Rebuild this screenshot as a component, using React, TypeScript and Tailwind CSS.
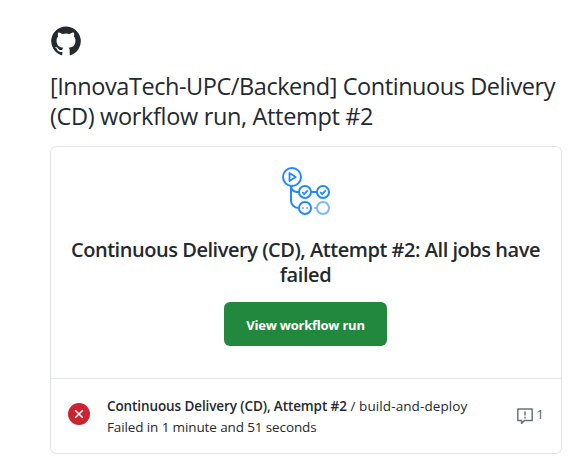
import React from 'react';

function GitHubMark() {
  return (
    <svg className="block size-8" viewBox="0 0 16 16" fill="#24292e" aria-label="GitHub">
      <path d="M8 .7a7.4 7.4 0 0 0-2.34 14.42c.37.07.5-.16.5-.36v-1.38c-2.05.45-2.49-.87-2.49-.87-.34-.86-.82-1.08-.82-1.08-.67-.46.05-.45.05-.45.74.05 1.13.76 1.13.76.66 1.13 1.73.8 2.15.61.07-.48.26-.8.47-.99-1.64-.18-3.37-.82-3.37-3.65 0-.81.29-1.47.76-1.99-.07-.18-.33-.94.08-1.96 0 0 .62-.2 2.03.76a7.1 7.1 0 0 1 3.7 0c1.41-.96 2.03-.76 2.03-.76.41 1.02.15 1.78.08 1.96.47.52.76 1.18.76 1.99 0 2.84-1.73 3.47-3.38 3.65.27.23.5.68.5 1.37v2.03c0 .2.13.43.51.36A7.4 7.4 0 0 0 8 .7Z" />
    </svg>
  );
}

function WorkflowIcon() {
  return (
    <svg className="block h-[50px] w-[50px]" viewBox="0 0 50 50" fill="none" stroke="#2188ff" strokeWidth="2">
      <path d="M10 20v14.5a7.5 7.5 0 0 0 7.5 7.5M10 20a6 6 0 0 0 6 6H18M30 26h6" />
      <circle cx="11" cy="11" r="9" />
      <path d="M8.5 7v8l6.2-4z" strokeLinejoin="round" strokeWidth="1.8" />
      <circle cx="24" cy="26" r="6" />
      <circle cx="42" cy="26" r="6" />
      <path d="m21.3 26.2 1.9 1.9 3.6-3.8M39.3 26.2l1.9 1.9 3.6-3.8" strokeWidth="1.8" />
      <circle cx="24" cy="42" r="6" />
      <path d="M21.2 42h1.7M25.2 42h1.7" stroke="#79b8ff" strokeWidth="1.8" />
      <path d="M33.3 42h3" stroke="#79b8ff" />
      <circle cx="42" cy="42" r="6" stroke="#79b8ff" />
    </svg>
  );
}

function FailedIcon() {
  return (
    <svg className="block size-[22px] shrink-0" viewBox="0 0 22 22">
      <circle cx="11" cy="11" r="11" fill="#cb2431" />
      <path d="m7.2 7.2 7.6 7.6m0-7.6-7.6 7.6" stroke="#fff" strokeWidth="1.5" fill="none" />
    </svg>
  );
}

function AnnotationIcon() {
  return (
    <svg className="block size-4" viewBox="0 0 16 16" fill="none" stroke="#6a737d" strokeWidth="1.5">
      <path d="M1 .9h14a.2.2 0 0 1 .2.2v11.3a.2.2 0 0 1-.2.2H7.6l-3 2.7v-2.7H1a.2.2 0 0 1-.2-.2V1.1A.2.2 0 0 1 1 .9Z" />
      <path d="M8 3.5v4M8 8.8v1.7" />
    </svg>
  );
}

export default function App() {
  return (
    <main className="h-[472px] w-[578px] overflow-hidden bg-white pl-[50px] pt-[25px] font-['Open_Sans',sans-serif] text-[#24292e]">
      <GitHubMark />
      <h1 className="mt-[14px] text-[23.5px] leading-[30px] font-normal whitespace-nowrap">
        <span className="block tracking-[-0.44px]">[InnovaTech-UPC/Backend] Continuous Delivery</span>
        <span className="block tracking-[-0.34px]">(CD) workflow run, Attempt #2</span>
      </h1>
      <section className="mt-[15px] h-[308px] w-[512px] rounded-md border border-[#e1e4e8]">
        <div className="flex h-[232px] flex-col items-center border-b border-[#e1e4e8] pt-[19px] pr-px">
          <WorkflowIcon />
          <h2 className="mt-[21px] text-center text-xl leading-[25px] font-semibold whitespace-nowrap">
            <span className="block tracking-[-0.46px]">Continuous Delivery (CD), Attempt #2: All jobs have</span>
            <span className="block tracking-[-0.4px]">failed</span>
          </h2>
          <button className="mt-[15px] h-11 w-[163px] rounded-md bg-[#22883e] pt-[3px] text-[13px] font-bold tracking-[-0.22px] whitespace-nowrap text-white">
            View workflow run
          </button>
        </div>
        <div className="flex h-[70px] items-center pl-[17px] pr-[17px]">
          <FailedIcon />
          <div className="ml-[17px] flex-1 pt-[6px] text-[13.5px] leading-[21px] whitespace-nowrap">
            <p><strong className="font-semibold tracking-[-0.1px]">Continuous Delivery (CD), Attempt #2</strong><span className="tracking-[0.1px]"> / build-and-deploy</span></p>
            <p className="tracking-[-0.12px]">Failed in 1 minute and 51 seconds</p>
          </div>
          <div className="flex items-center gap-[3px] pt-[3px] text-[13.5px] text-[#586069]">
            <AnnotationIcon />
            <span className="-mt-[2px]">1</span>
          </div>
        </div>
      </section>
    </main>
  );
}
